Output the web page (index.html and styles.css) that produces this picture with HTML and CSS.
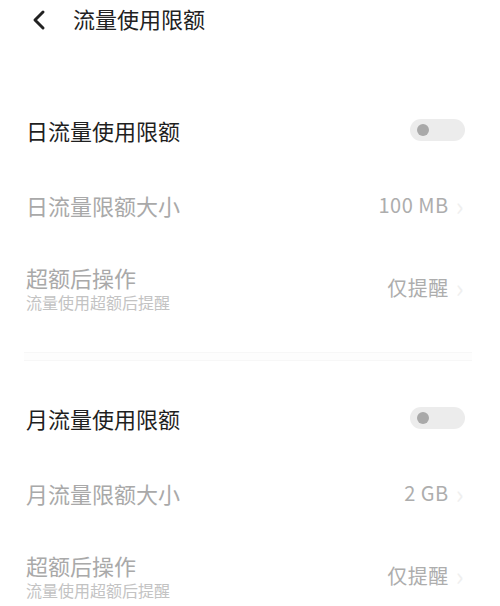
FILE: index.html
```html
<!DOCTYPE html>
<html>
<head>
  <meta charset="utf-8">
  <title>流量使用限额</title>
  <link rel="stylesheet" href="styles.css">
</head>
<body>
  <div class="header">
    <svg class="back" width="14" height="22" viewBox="0 0 14 22">
      <path d="M11 3 L3 11 L11 19" fill="none" stroke="#222" stroke-width="3" stroke-linecap="round" stroke-linejoin="round"/>
    </svg>
    <span class="title">流量使用限额</span>
  </div>

  <div class="section first">
    <div class="row">
      <span class="label">日流量使用限额</span>
      <span class="toggle"><span class="knob"></span></span>
    </div>
    <div class="row">
      <span class="label off">日流量限额大小</span>
      <span class="value">100 MB<span class="arrow">›</span></span>
    </div>
    <div class="row tall">
      <div>
        <div class="label off">超额后操作</div>
        <div class="sub">流量使用超额后提醒</div>
      </div>
      <span class="value">仅提醒<span class="arrow">›</span></span>
    </div>
  </div>

  <div class="divider"></div>

  <div class="section">
    <div class="row">
      <span class="label">月流量使用限额</span>
      <span class="toggle"><span class="knob"></span></span>
    </div>
    <div class="row">
      <span class="label off">月流量限额大小</span>
      <span class="value">2 GB<span class="arrow">›</span></span>
    </div>
    <div class="row tall">
      <div>
        <div class="label off">超额后操作</div>
        <div class="sub">流量使用超额后提醒</div>
      </div>
      <span class="value">仅提醒<span class="arrow">›</span></span>
    </div>
  </div>
</body>
</html>
```

FILE: styles.css
```css
body {
    margin: 0;
    background: #fff;
    font-family: "Noto Sans CJK SC", "Noto Sans", sans-serif;
    color: #1a1a1a;
    overflow: hidden;
}
.header {
    height: 40px;
    display: flex;
    align-items: center;
    padding-left: 32px;
}
.back {
    display: block;
}
.title {
    margin-left: 27px;
    margin-bottom: 4px;
    font-size: 22px;
    line-height: 26px;
    color: #222;
}
.section {
    padding: 0 35px 0 26px;
}
.section.first {
    margin-top: 52px;
}
.row {
    height: 75px;
    display: flex;
    align-items: center;
    justify-content: space-between;
}
.row.tall {
    height: 90px;
}
.label {
    font-size: 22px;
    line-height: 30px;
    color: #1f1f1f;
}
.label.off {
    color: #a9a9a9;
}
.sub {
    font-size: 16px;
    line-height: 20px;
    color: #c3c3c3;
}
.value {
    display: flex;
    align-items: center;
    font-size: 20px;
    letter-spacing: 0.5px;
    color: #adadad;
    margin-right: 1px;
}
.arrow {
    margin-left: 7px;
    font-size: 26px;
    line-height: 20px;
    color: #efefef;
}
.toggle {
    width: 55px;
    height: 22px;
    border-radius: 11px;
    background: #ececec;
    display: flex;
    align-items: center;
}
.knob {
    width: 12px;
    height: 12px;
    border-radius: 50%;
    background: #a9a9a9;
    margin-left: 7px;
}
.divider {
    margin: 20px 28px 19px 24px;
    height: 7px;
    background: #fdfdfd;
    border-top: 1px solid #f7f7f7;
    border-bottom: 1px solid #f7f7f7;
}
```
